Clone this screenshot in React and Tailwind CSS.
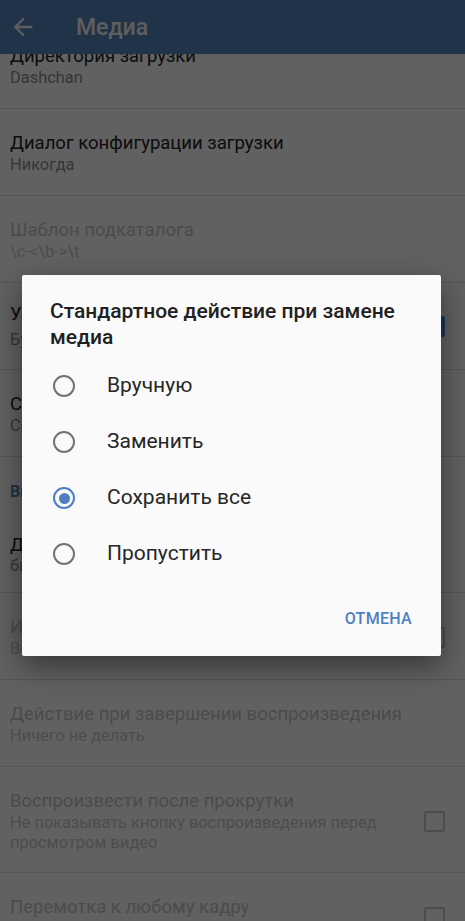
import React from "react";

function Checkbox({ checked, disabled }) {
  if (checked) {
    return (
      <div className="w-[21px] h-[21px] rounded-[2px] bg-[#4a8ae0] flex items-center justify-center shrink-0">
        <svg width="15" height="15" viewBox="0 0 24 24">
          <path d="M9 16.17L4.83 12l-1.42 1.41L9 19 21 7l-1.41-1.41z" fill="#fafafa" />
        </svg>
      </div>
    );
  }
  return (
    <div
      className={
        "w-[21px] h-[21px] rounded-[2px] border-2 shrink-0 " +
        (disabled ? "border-[#c4c4c4]" : "border-[#757575]")
      }
    />
  );
}

function Item({ title, summary, disabled, checkbox, checked, className = "", gap = "", subLeading = "leading-[20px]" }) {
  return (
    <div className={"flex items-center border-b border-[#dcdcdc] pl-[10px] pr-[20px] " + className}>
      <div className="flex-1 min-w-0">
        <div
          className={
            "text-[18.5px] leading-[24px] " + (disabled ? "text-[#c2c2c2]" : "text-[#222222]")
          }
        >
          {title}
        </div>
        {summary && (
          <div
            className={
              "text-[16.4px] " + subLeading + " " + gap + " " + (disabled ? "text-[#c6c6c6]" : "text-[#8c8c8c]")
            }
          >
            {summary}
          </div>
        )}
      </div>
      {checkbox && (
        <div className="pl-[20px]">
          <Checkbox checked={checked} disabled={disabled} />
        </div>
      )}
    </div>
  );
}

function Radio({ checked }) {
  if (checked) {
    return (
      <div className="w-[22px] h-[22px] rounded-full border-2 border-[#4d80c2] flex items-center justify-center shrink-0">
        <div className="w-[11px] h-[11px] rounded-full bg-[#4d80c2]" />
      </div>
    );
  }
  return <div className="w-[22px] h-[22px] rounded-full border-2 border-[#737373] shrink-0" />;
}

export default function App() {
  const options = [
    { label: "Вручную", checked: false },
    { label: "Заменить", checked: false },
    { label: "Сохранить все", checked: true },
    { label: "Пропустить", checked: false },
  ];
  return (
    <div
      className="relative w-[465px] h-[921px] overflow-hidden bg-[#fafafa]"
      style={{ fontFamily: "Roboto, 'Noto Sans', sans-serif" }}
    >
      <div className="relative z-10 h-[54px] bg-[#5683bd] flex items-center">
        <svg width="28" height="28" viewBox="0 0 24 24" className="ml-[9px]">
          <path
            d="M20 11H7.83l5.59-5.59L12 4l-8 8 8 8 1.41-1.41L7.83 13H20v-2z"
            fill="#f2f2f2"
          />
        </svg>
        <div className="ml-[39px] text-[#f2f2f2] text-[23px] font-medium leading-none">Медиа</div>
      </div>

      <div className="-mt-[32px]">
        <Item className="pt-[22px] pb-[20px]" title="Директория загрузки" summary="Dashchan" />
        <Item className="pt-[22px] pb-[20px]" title="Диалог конфигурации загрузки" summary="Никогда" />
        <Item className="pt-[22px] pb-[20px]" disabled title="Шаблон подкаталога" summary="\c-<\b->\t" />
        <Item
          className="pt-[19px] pb-[19px]"
          gap="mt-[4px]"
          title="Уникальные имена файлов"
          summary="Будут добавлены индексы"
          checkbox
          checked
        />
        <Item
          className="pt-[22px] pb-[20px]"
          title="Стандартное действие при замене медиа"
          summary="Сохранить все"
        />
        <div className="pl-[10px] pt-[25px] pb-[11px] text-[16px] leading-[20px] font-bold text-[#4f84c4]">
          Видео
        </div>
        <Item
          className="pt-[20px] pb-[17px]"
          subLeading="leading-[18px]"
          title="Действие видеоплеера"
          summary="быстрое воспроизведение"
        />
        <Item
          className="pt-[22px] pb-[20px]"
          disabled
          title="Использовать внешний плеер"
          summary="Воспроизводить в отдельном окне видео"
          checkbox
        />
        <Item
          className="pt-[22px] pb-[20px]"
          disabled
          title="Действие при завершении воспроизведения"
          summary="Ничего не делать"
        />
        <Item
          className="pt-[22px] pb-[19px]"
          disabled
          title="Воспроизвести после прокрутки"
          summary="Не показывать кнопку воспроизведения перед просмотром видео"
          checkbox
        />
        <Item
          className="pt-[22px] pb-[20px]"
          disabled
          title="Перемотка к любому кадру"
          summary="Может работать медленнее"
          checkbox
        />
      </div>

      <div className="absolute inset-0 z-20 bg-black/[0.61]" />

      <div className="absolute left-[22px] top-[275px] z-30 w-[419px] bg-[#fafafa] rounded-[2px] shadow-[0_10px_30px_rgba(0,0,0,0.45)]">
        <div className="pt-[23px] pl-[28px] pr-[28px] text-[21px] leading-[26px] font-medium text-[#212121]">
          Стандартное действие при замене медиа
        </div>
        <div className="mt-[8px]">
          {options.map((o) => (
            <div key={o.label} className="h-[56px] flex items-center pl-[31px]">
              <Radio checked={o.checked} />
              <div className="ml-[32px] text-[21px] text-[#262626]">{o.label}</div>
            </div>
          ))}
        </div>
        <div className="flex justify-end pt-[19px] pb-[19px] pr-[29px]">
          <div className="h-[36px] flex items-center text-[16px] font-medium tracking-[0.3px] text-[#4d80c2]">
            ОТМЕНА
          </div>
        </div>
      </div>
    </div>
  );
}
